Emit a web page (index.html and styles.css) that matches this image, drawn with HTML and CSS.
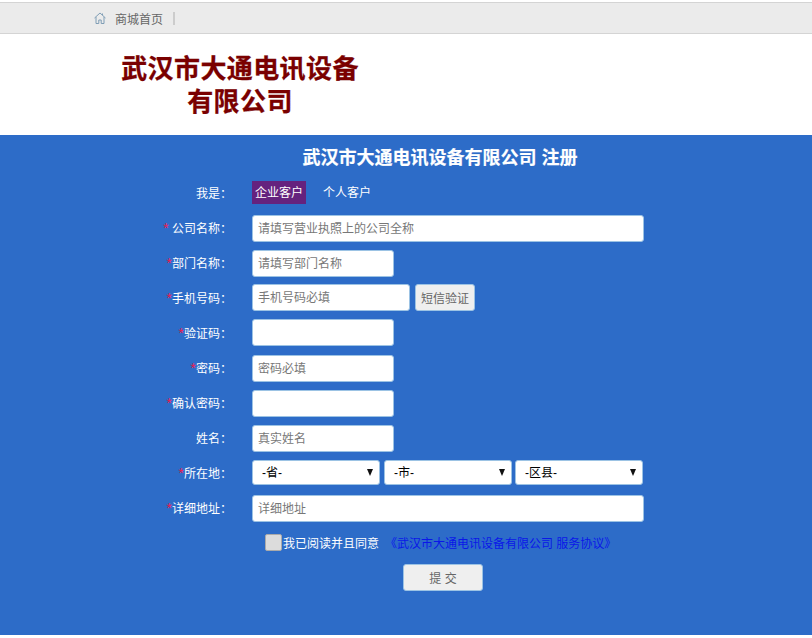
FILE: index.html
```html
<!DOCTYPE html>
<html lang="zh-CN">
<head>
<meta charset="utf-8">
<title>注册</title>
<link rel="stylesheet" href="styles.css">
</head>
<body>
<div class="topbar">
  <svg class="home" width="12" height="12" viewBox="0 0 12 12" fill="none" stroke="#7f9db5" stroke-width="1"><path d="M0.500 6 6 1l5.500 5"/><path d="M2 5v6.500h2.800V8h2.400v3.500H10V5"/><path d="M8.500 3V1.500"/></svg>
  <span class="toplink">商城首页</span>
  <span class="topsep"></span>
</div>
<header class="brand"><h1 class="brand-name">武汉市大通电讯设备有限公司</h1></header>
<main class="panel">
  <h2 class="title">武汉市大通电讯设备有限公司 注册</h2>
  <form class="form">
    <div class="row tight"><label class="label">我是：</label><div class="field"><span class="tab active">企业客户</span><span class="tab">个人客户</span></div></div>
    <div class="row"><label class="label"><i>*</i> 公司名称：</label><div class="field"><input class="input wide" placeholder="请填写营业执照上的公司全称"></div></div>
    <div class="row"><label class="label"><i>*</i>部门名称：</label><div class="field"><input class="input" placeholder="请填写部门名称"></div></div>
    <div class="row tight"><label class="label"><i>*</i>手机号码：</label><div class="field"><input class="input phone" placeholder="手机号码必填"><button type="button" class="btn sms">短信验证</button></div></div>
    <div class="row tight"><label class="label"><i>*</i>验证码：</label><div class="field"><input class="input"></div></div>
    <div class="row"><label class="label"><i>*</i>密码：</label><div class="field"><input class="input" placeholder="密码必填"></div></div>
    <div class="row"><label class="label"><i>*</i>确认密码：</label><div class="field"><input class="input"></div></div>
    <div class="row"><label class="label">姓名：</label><div class="field"><input class="input" placeholder="真实姓名"></div></div>
    <div class="row tight"><label class="label"><i>*</i>所在地：</label><div class="field selects">
      <div class="select">-省-</div><div class="select">-市-</div><div class="select">-区县-</div>
    </div></div>
    <div class="row"><label class="label"><i>*</i>详细地址：</label><div class="field"><input class="input wide" placeholder="详细地址"></div></div>
    <div class="agree"><span class="check"></span><span>我已阅读并且同意</span><a class="link">《武汉市大通电讯设备有限公司 服务协议》</a></div>
    <div class="submit"><button type="button" class="btn send">提 交</button></div>
  </form>
</main>
</body>
</html>
```
FILE: styles.css
```css
* { box-sizing: border-box; }
html, body { margin: 0; padding: 0; background: #fff; }
body { font-family: "Liberation Sans", "Noto Sans CJK SC", sans-serif; font-size: 12px; height: 638px; overflow: hidden; }
.topbar { height: 32px; margin-top: 2px; background: #ebebeb; border-top: 1px solid #d4d4d4; border-bottom: 1px solid #d4d4d4; display: flex; align-items: center; padding-left: 94px; color: #666; }
.home { flex: none; }
.toplink { margin-left: 9px; }
.topsep { width: 2px; height: 13px; background: #ccc; margin-left: 10px; }
.brand { height: 101px; padding: 19px 0 0 120px; }
.brand-name { margin: 0; width: 240px; text-align: center; font-size: 26px; letter-spacing: 0.4px; line-height: 33px; font-weight: 700; color: #7a0000; -webkit-text-stroke: 0.3px #7a0000; }
.panel { height: 500px; background: #2d6cc8; color: #fff; }
.title { margin: 0; height: 41px; text-align: center; font-size: 18px; line-height: 46px; font-weight: 700; width: 812px; padding-left: 68px; -webkit-text-stroke: 0.2px #fff; }
.form { display: flex; flex-direction: column; }
.row { height: 35px; display: grid; grid-template-columns: 232px 1fr; column-gap: 20px; align-items: center; }
.label { text-align: right; margin-bottom: 2px; }
.label i { font-style: normal; font-size: 14px; line-height: 12px; color: #f01a50; }
.field { display: flex; align-items: center; }
.tight .field { margin-bottom: 2px; }
.tab { height: 23px; line-height: 25px; padding: 0 3px; margin-right: 14px; }
.tab.active { background: #65227e; }
.input { width: 142px; height: 27px; padding: 0 5px; border: 1px solid #9cc3e4; border-radius: 3px; background: #fff; font: inherit; color: #333; outline: none; }
.input::placeholder { color: #777; opacity: 1; }
.input.wide { width: 392px; }
.input.phone { width: 158px; }
.btn { height: 27px; border: 1px solid #9cc3e4; border-radius: 3px; background: #efefef; color: #666; font: inherit; padding: 0; }
.sms { width: 60px; margin-left: 5px; }
.selects { gap: 4px; }
.select { position: relative; width: 128px; height: 25px; line-height: 25px; padding-left: 9px; border: 1px solid #9cc3e4; border-radius: 3px; background: #fff; color: #000; }
.select:last-child { margin-left: -1px; }
.select::after { content: ""; position: absolute; right: 6px; top: 8px; border-left: 3.500px solid transparent; border-right: 3.500px solid transparent; border-top: 7px solid #111; }
.agree { height: 35px; margin-top: -1px; display: flex; align-items: center; padding-left: 265px; }
.check { width: 17px; height: 17px; margin-right: 1px; background: #dcdcdc; border: 1px solid #aaa; border-radius: 2px; }
.link { margin-left: 6px; color: #0a17e8; }
.submit { height: 35px; padding-left: 403px; display: flex; align-items: center; }
.send { width: 80px; }
```
